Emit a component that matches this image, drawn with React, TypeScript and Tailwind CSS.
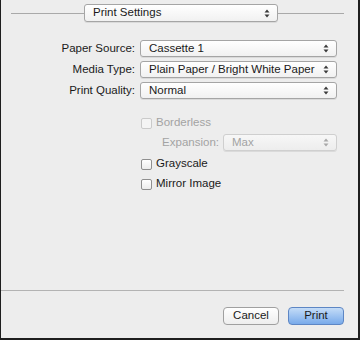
import React from "react";

const font = { fontFamily: '"Liberation Sans", Arial, sans-serif' };

function Arrows({ muted = false }: { muted?: boolean }) {
  const c = muted ? "#a8a8a8" : "#3a3a3a";
  return (
    <svg width="6" height="9" viewBox="0 0 6 9" className="shrink-0">
      <path d="M0.5 3.5 L3 0.5 L5.5 3.5 Z" fill={c} />
      <path d="M0.5 5.5 L3 8.5 L5.5 5.5 Z" fill={c} />
    </svg>
  );
}

function Popup({ value, className = "", muted = false }: { value: string; className?: string; muted?: boolean }) {
  return (
    <div
      className={`flex items-center justify-between h-[17px] pl-[8px] pr-[7px] rounded-[3px] border shadow-[0_1px_0_rgba(0,0,0,0.08)] ${
        muted
          ? "border-[#cfcfcf] bg-gradient-to-b from-[#f7f7f7] to-[#ededed] text-[#a3a3a3]"
          : "border-[#a5a5a5] bg-gradient-to-b from-[#ffffff] to-[#f1f1f1] text-[#1a1a1a]"
      } ${className}`}
    >
      <span className="leading-none whitespace-nowrap">{value}</span>
      <Arrows muted={muted} />
    </div>
  );
}

function Check({ label, muted = false }: { label: string; muted?: boolean }) {
  return (
    <div className="flex items-center gap-[4px] h-[12px]">
      <div
        className={`w-[11px] h-[11px] rounded-[2px] border ${
          muted ? "border-[#cacaca] bg-[#f4f4f4]" : "border-[#8f8f8f] bg-gradient-to-b from-white to-[#ececec]"
        }`}
      />
      <span className={`leading-none ${muted ? "text-[#a3a3a3]" : "text-[#1a1a1a]"}`}>{label}</span>
    </div>
  );
}

export default function App() {
  const rows = [
    { label: "Paper Source:", value: "Cassette 1" },
    { label: "Media Type:", value: "Plain Paper / Bright White Paper" },
    { label: "Print Quality:", value: "Normal" },
  ];

  return (
    <div
      style={font}
      className="w-[360px] h-[340px] bg-[#ededed] border-l border-r-2 border-b-2 border-[#1e1e1e] flex flex-col text-[11.5px] text-[#1a1a1a]"
    >
      {/* header popup */}
      <div className="flex items-center pt-[4px] pl-[10px]">
        <div className="w-[73px] h-px bg-[#a9a9a9]" />
        <Popup value="Print Settings" className="w-[194px] h-[18px]" />
        <div className="w-[66px] h-px bg-[#a9a9a9]" />
      </div>

      {/* main settings */}
      <div className="flex flex-col gap-[4px] mt-[18px]">
        {rows.map((r) => (
          <div key={r.label} className="flex items-center">
            <span className="w-[134px] text-right leading-none">{r.label}</span>
            <Popup value={r.value} className="ml-[5px] w-[197px]" />
          </div>
        ))}
      </div>

      <div className="flex flex-col pl-[140px] mt-[18px]">
        <Check label="Borderless" muted />
        <div className="flex items-center mt-[5px]">
          <span className="w-[78px] text-right text-[#a3a3a3] leading-none">Expansion:</span>
          <Popup value="Max" muted className="ml-[4px] w-[114px]" />
        </div>
        <div className="flex flex-col gap-[8px] mt-[7px]">
          <Check label="Grayscale" />
          <Check label="Mirror Image" />
        </div>
      </div>

      <div className="flex-1" />

      <div className="w-[343px] h-px bg-[#b3b3b3]" />
      <div className="flex justify-end gap-[9px] pr-[14px] pt-[16px] pb-[13px]">
        <button className="w-[56px] h-[18px] rounded-[4px] border border-[#a0a0a0] bg-gradient-to-b from-white to-[#eeeeee] text-[#1a1a1a] leading-none">
          Cancel
        </button>
        <button className="w-[56px] h-[18px] rounded-[4px] border border-[#5d86c4] bg-gradient-to-b from-[#c4dcf7] to-[#78aaea] text-[#1a1a1a] leading-none">
          Print
        </button>
      </div>
    </div>
  );
}
